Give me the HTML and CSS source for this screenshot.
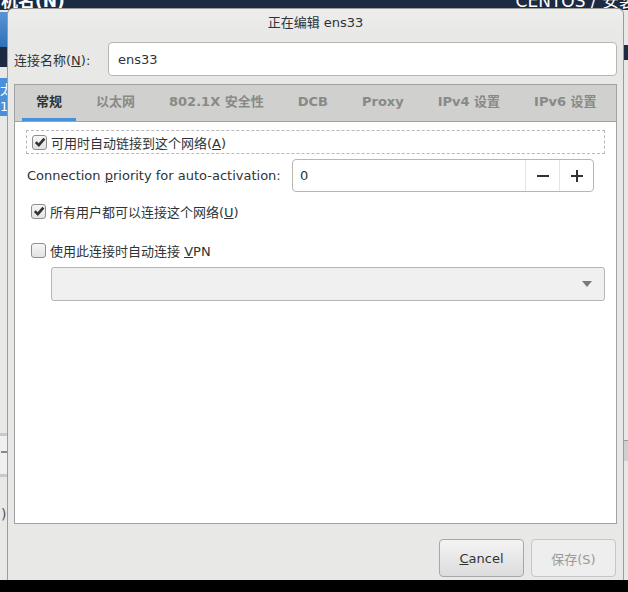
FILE: index.html
```html
<!DOCTYPE html>
<html lang="zh">
<head>
    <meta charset="UTF-8">
    <title>正在编辑 ens33</title>
    <link rel="stylesheet" href="styles.css">
</head>
<body>
    <div class="desktop">
        <div class="topbar">
            <span class="host-label">机名(N)</span>
            <span class="os-label">CENTOS / 安装</span>
        </div>
        <div class="backdrop">
            <div class="side-left">
                <div class="sl-blue"></div>
                <div class="sl-navy"></div>
                <div class="sl-gap"></div>
                <div class="sl-sel">太<br>1</div>
                <div class="sl-fill"></div>
                <div class="sl-box"><span class="sl-dash"></span></div>
                <div class="sl-rest">)</div>
            </div>
            <div class="side-right">
                <div class="sr-gap"></div>
                <div class="sr-navy"></div>
                <div class="sr-fill"></div>
                <div class="sr-line"></div>
                <div class="sr-rest"></div>
            </div>
        </div>
        <div class="bottombar"></div>

        <div class="dialog">
            <div class="dialog-title">正在编辑 ens33</div>

            <div class="name-row">
                <label for="conName">连接名称(<u>N</u>):</label>
                <input type="text" id="conName" class="name-input" value="ens33">
            </div>

            <div class="notebook">
                <div class="tabs">
                    <span class="tab active">常规</span>
                    <span class="tab">以太网</span>
                    <span class="tab">802.1X 安全性</span>
                    <span class="tab">DCB</span>
                    <span class="tab">Proxy</span>
                    <span class="tab">IPv4 设置</span>
                    <span class="tab">IPv6 设置</span>
                </div>
                <div class="page">
                    <div class="check-row focused">
                        <span class="checkbox checked">
                            <svg width="12" height="12" viewBox="0 0 12 12"><path d="M1.8 6.2 L4.8 9.2 L10.4 2.6" fill="none" stroke="#2e3436" stroke-width="2.6"/></svg>
                        </span>
                        <span>可用时自动链接到这个网络(<u>A</u>)</span>
                    </div>

                    <div class="priority-row">
                        <span>Connection <u>p</u>riority for auto-activation:</span>
                        <div class="spin">
                            <span class="spin-value">0</span>
                            <span class="spin-btn">
                                <svg width="12" height="12" viewBox="0 0 12 12"><rect x="0" y="5" width="12" height="2" fill="#2e3436"/></svg>
                            </span>
                            <span class="spin-btn">
                                <svg width="12" height="12" viewBox="0 0 12 12"><rect x="0" y="5" width="12" height="2" fill="#2e3436"/><rect x="5" y="0" width="2" height="12" fill="#2e3436"/></svg>
                            </span>
                        </div>
                    </div>

                    <div class="check-row">
                        <span class="checkbox checked">
                            <svg width="12" height="12" viewBox="0 0 12 12"><path d="M1.8 6.2 L4.8 9.2 L10.4 2.6" fill="none" stroke="#2e3436" stroke-width="2.6"/></svg>
                        </span>
                        <span>所有用户都可以连接这个网络(<u>U</u>)</span>
                    </div>

                    <div class="check-row vpn-row">
                        <span class="checkbox"></span>
                        <span>使用此连接时自动连接 <u>V</u>PN</span>
                    </div>

                    <div class="combo">
                        <svg width="10" height="6" viewBox="0 0 10 6"><path d="M0 0 H10 L5 6 Z" fill="#7a7a7a"/></svg>
                    </div>
                </div>
            </div>

            <div class="button-row">
                <button class="btn"><u>C</u>ancel</button>
                <button class="btn" disabled>保存(S)</button>
            </div>
        </div>
    </div>
</body>
</html>
```

FILE: styles.css
```css
body {
    margin: 0;
    padding: 0;
    font-family: "DejaVu Sans", "Noto Sans CJK SC", sans-serif;
    font-size: 13px;
    color: #2e3436;
}

.desktop {
    position: relative;
    width: 628px;
    height: 592px;
    overflow: hidden;
    background-color: #e8e8e7;
    display: flex;
    flex-direction: column;
}

/* installer window behind the dialog */
.topbar {
    height: 10px;
    flex: none;
    background-color: #1c2a42;
    color: #ffffff;
    display: flex;
    justify-content: space-between;
    overflow: hidden;
    font-size: 17px;
    line-height: 10px;
}

.host-label {
    margin-left: 1px;
    margin-top: -4px;
    font-weight: bold;
}

.os-label {
    margin-right: -8px;
    margin-top: -4px;
}

.backdrop {
    flex: 1;
    display: flex;
    justify-content: space-between;
}

.bottombar {
    height: 12px;
    flex: none;
    background-color: #000000;
}

.side-left {
    width: 8px;
    display: flex;
    flex-direction: column;
}

.sl-blue {
    height: 35px;
    background: linear-gradient(#5a95d4, #2f70b8);
    border-top: 2px solid #e8e8e7;
}

.sl-navy {
    height: 20px;
    background-color: #1c2a42;
}

.sl-gap {
    height: 11px;
    background-color: #e8e8e7;
}

.sl-sel {
    height: 38px;
    background-color: #4a90d9;
    color: #ffffff;
    font-size: 13px;
    line-height: 17px;
    padding-top: 3px;
    box-sizing: border-box;
    overflow: hidden;
}

.sl-fill {
    height: 317px;
    background-color: #e8e8e7;
}

.sl-box {
    height: 38px;
    background-color: #f0f0f0;
    border-top: 3px solid #c9c9c9;
    border-bottom: 3px solid #c9c9c9;
    position: relative;
}

.sl-dash {
    position: absolute;
    left: 1px;
    top: 15px;
    width: 6px;
    height: 2px;
    background-color: #8a8a8a;
}

.sl-rest {
    flex: 1;
    background-color: #e8e8e7;
    padding-top: 30px;
    font-size: 14px;
    color: #555;
    line-height: 14px;
    text-indent: 1px;
}

.side-right {
    width: 4px;
    display: flex;
    flex-direction: column;
}

.sr-gap {
    height: 35px;
    background-color: #e8e8e7;
}

.sr-navy {
    height: 15px;
    background-color: #1c2a42;
}

.sr-fill {
    height: 380px;
    background-color: #e8e8e7;
}

.sr-line {
    height: 20px;
    background-color: #cfcfcf;
    border-top: 1px solid #9a9a9a;
}

.sr-rest {
    flex: 1;
    background-color: #e8e8e7;
}

/* dialog window */
.dialog {
    position: absolute;
    left: 7px;
    top: 8px;
    width: 617px;
    height: 572px;
    box-sizing: border-box;
    background-color: #e8e8e7;
    border: 1px solid #9c9c9a;
    border-bottom: none;
    border-radius: 6px 6px 0 0;
    display: flex;
    flex-direction: column;
    padding: 0 6px 0 6px;
}

.dialog-title {
    height: 27px;
    line-height: 27px;
    text-align: center;
    background: linear-gradient(#ededec, #e8e8e7);
    margin: 0 -6px;
    border-radius: 6px 6px 0 0;
}

.name-row {
    display: flex;
    align-items: center;
    margin-top: 6px;
}

.name-row label {
    width: 94px;
    flex: none;
}

.name-input {
    flex: 1;
    height: 34px;
    box-sizing: border-box;
    border: 1px solid #b6b6b3;
    border-radius: 4px;
    padding: 0 9px;
    font-family: inherit;
    font-size: 13px;
    color: #2e3436;
    background-color: #ffffff;
    outline: none;
}

.notebook {
    margin-top: 8px;
    height: 438px;
    border: 1px solid #a1a1a1;
    display: flex;
    flex-direction: column;
    background-color: #ffffff;
}

.tabs {
    height: 36px;
    flex: none;
    background-color: #d0d0cf;
    border-bottom: 1px solid #a1a1a1;
    display: flex;
    padding-left: 7px;
    gap: 6px;
}

.tab {
    padding: 0 14px;
    line-height: 34px;
    font-weight: bold;
    color: #888a85;
    border-bottom: 3px solid transparent;
}

.tab.active {
    color: #2e3436;
    border-bottom-color: #4a90d9;
}

.page {
    flex: 1;
    display: flex;
    flex-direction: column;
    padding: 8px 11px 0 11px;
}

.check-row {
    display: flex;
    align-items: center;
    height: 24px;
    padding-left: 5px;
    gap: 4px;
}

.check-row.focused {
    border: 1px dashed #b8b8b8;
    box-sizing: border-box;
}

.checkbox {
    width: 15px;
    height: 15px;
    box-sizing: border-box;
    border: 1px solid #8e8e8c;
    border-radius: 3px;
    background: linear-gradient(#f6f6f6, #e2e2e2);
    display: flex;
    align-items: center;
    justify-content: center;
}

.priority-row {
    display: flex;
    align-items: center;
    margin-top: 5px;
    margin-bottom: 7px;
}

.priority-row > span {
    width: 265px;
    flex: none;
    padding-left: 1px;
}

.spin {
    width: 302px;
    height: 33px;
    box-sizing: border-box;
    border: 1px solid #b6b6b3;
    border-radius: 4px;
    display: flex;
    background-color: #ffffff;
}

.spin-value {
    flex: 1;
    line-height: 31px;
    padding-left: 7px;
}

.spin-btn {
    width: 33px;
    border-left: 1px solid #e4e4e4;
    display: flex;
    align-items: center;
    justify-content: center;
}

.vpn-row {
    margin-top: 15px;
}

.combo {
    margin: 5px 0 0 25px;
    height: 34px;
    box-sizing: border-box;
    border: 1px solid #b6b6b3;
    border-radius: 3px;
    background-color: #f0f0f0;
    display: flex;
    align-items: center;
    justify-content: flex-end;
    padding-right: 12px;
}

.button-row {
    display: flex;
    justify-content: flex-end;
    gap: 7px;
    margin-top: 15px;
    padding-right: 1px;
}

.btn {
    width: 85px;
    height: 38px;
    border: 1px solid #a8a8a6;
    border-radius: 4px;
    background: linear-gradient(#f4f4f4, #dcdcdc);
    font-family: inherit;
    font-size: 13px;
    color: #2e3436;
}

.btn:disabled {
    background: #eeeeee;
    border-color: #c6c6c4;
    color: #9a9a98;
}
```
